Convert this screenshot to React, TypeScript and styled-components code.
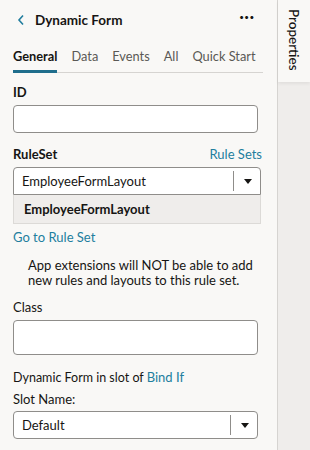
import React from "react";
import styled, { createGlobalStyle } from "styled-components";

const GlobalStyle = createGlobalStyle`
  html, body {
    margin: 0;
    padding: 0;
    background: #f9f8f6;
  }
  body {
    font-family: Lato, "Noto Sans", sans-serif;
    color: #161513;
  }
`;

const Shell = styled.div`
  display: flex;
  width: 310px;
  height: 450px;
  overflow: hidden;
`;

const Panel = styled.div`
  width: 277px;
  flex-shrink: 0;
  background: #f9f8f6;
  padding: 0 15px 0 13px;
  box-sizing: border-box;
`;

const Rail = styled.div`
  flex: 1;
  display: flex;
  flex-direction: column;
  border-left: 1px solid #d6d4d1;
  background: #efedeb;
`;

const RailTab = styled.div`
  height: 82px;
  background: #f9f8f6;
  display: flex;
  justify-content: center;
  padding-top: 9px;
  box-sizing: border-box;
  box-shadow: 0 2px 3px rgba(0, 0, 0, 0.06);
`;

const RailLabel = styled.span`
  writing-mode: vertical-rl;
  font-size: 13.5px;
  font-weight: 500;
  color: #161513;
`;

const Header = styled.div`
  display: flex;
  align-items: center;
  height: 40px;
  padding-right: 2px;
`;

const BackButton = styled.span`
  display: flex;
  align-items: center;
  width: 14px;
  margin-left: 4px;
  margin-right: 4px;
  color: #227e9e;
`;

const Title = styled.div`
  flex: 1;
  font-size: 13.5px;
  font-weight: 700;
`;

const More = styled.span`
  font-size: 15px;
  font-weight: 900;
  letter-spacing: 1px;
  margin-right: 5px;
  line-height: 1;
  transform: translateY(-4px);
`;

const Tabs = styled.div`
  display: flex;
  gap: 14px;
  border-bottom: 1px solid #d6d4d1;
  margin-right: -1px;
  height: 32px;
  align-items: flex-end;
`;

const Tab = styled.div<{ $active?: boolean }>`
  font-size: 12.8px;
  font-weight: ${(p) => (p.$active ? 700 : 400)};
  color: ${(p) => (p.$active ? "#161513" : "#5a5855")};
  padding-bottom: 6px;
  border-bottom: ${(p) => (p.$active ? "3px solid #1f6e8c" : "3px solid transparent")};
  margin-bottom: -1px;
  white-space: nowrap;
`;

const Field = styled.div<{ $top?: number }>`
  display: flex;
  flex-direction: column;
  margin-top: ${(p) => p.$top ?? 0}px;
`;

const LabelRow = styled.div`
  display: flex;
  justify-content: space-between;
  align-items: baseline;
  margin-bottom: 5px;
`;

const Label = styled.span<{ $bold?: boolean }>`
  font-size: 13px;
  font-weight: ${(p) => (p.$bold ? 700 : 400)};
`;

const Link = styled.a`
  color: #227e9e;
  font-size: 13px;
  text-decoration: none;
  cursor: pointer;
`;

const TextInput = styled.div<{ $h: number; $w?: number }>`
  height: ${(p) => p.$h}px;
  width: ${(p) => p.$w ?? 245}px;
  box-sizing: border-box;
  background: #fff;
  border: 1px solid #8f8d8a;
  border-radius: 4px;
`;

const Select = styled.div<{ $w: number; $open?: boolean }>`
  display: flex;
  align-items: center;
  height: 28px;
  width: ${(p) => p.$w}px;
  box-sizing: border-box;
  background: #fff;
  border: 1px solid #8f8d8a;
  border-radius: ${(p) => (p.$open ? "4px 4px 0 0" : "4px")};
`;

const SelectValue = styled.span`
  flex: 1;
  padding-left: 8px;
  font-size: 13px;
`;

const SelectToggle = styled.span`
  display: flex;
  align-items: center;
  justify-content: center;
  width: 26px;
  height: 20px;
  border-left: 1px solid #8f8d8a;
`;

const Caret = styled.span`
  width: 0;
  height: 0;
  border-left: 4px solid transparent;
  border-right: 4px solid transparent;
  border-top: 5px solid #161513;
  margin-left: 2px;
`;

const Option = styled.div`
  width: 248px;
  height: 29px;
  box-sizing: border-box;
  background: #efedeb;
  border: 1px solid #dcdad7;
  border-top: none;
  display: flex;
  align-items: center;
  padding-left: 10px;
  font-size: 13px;
  font-weight: 700;
`;

const Note = styled.p`
  margin: 13px 0 0 15px;
  font-size: 13px;
  line-height: 15px;
  width: 230px;
`;

const SlotText = styled.div`
  font-size: 12.5px;
  margin-top: 14px;
`;

const SlotLabel = styled.div`
  font-size: 13px;
  margin-top: 6px;
  margin-bottom: 4px;
`;

const Dropdown: React.FC<{ value: string; width: number; open?: boolean }> = ({
  value,
  width,
  open,
}) => (
  <Select $w={width} $open={open}>
    <SelectValue>{value}</SelectValue>
    <SelectToggle>
      <Caret />
    </SelectToggle>
  </Select>
);

const App: React.FC = () => {
  return (
    <Shell>
      <GlobalStyle />
      <Panel>
        <Header>
          <BackButton>
            <svg width="8" height="12" viewBox="0 0 8 12">
              <path d="M6 1.5 L2 6 L6 10.5" fill="none" stroke="currentColor" strokeWidth="1.6" />
            </svg>
          </BackButton>
          <Title>Dynamic Form</Title>
          <More>···</More>
        </Header>
        <Tabs>
          <Tab $active>General</Tab>
          <Tab>Data</Tab>
          <Tab>Events</Tab>
          <Tab>All</Tab>
          <Tab>Quick Start</Tab>
        </Tabs>

        <Field $top={11}>
          <LabelRow>
            <Label $bold>ID</Label>
          </LabelRow>
          <TextInput $h={28} />
        </Field>

        <Field $top={13}>
          <LabelRow>
            <Label $bold>RuleSet</Label>
            <Link>Rule Sets</Link>
          </LabelRow>
          <Dropdown value="EmployeeFormLayout" width={248} open />
          <Option>EmployeeFormLayout</Option>
        </Field>

        <Field $top={5}>
          <Link>Go to Rule Set</Link>
        </Field>
        <Note>App extensions will NOT be able to add new rules and layouts to this rule set.</Note>

        <Field $top={11}>
          <LabelRow>
            <Label>Class</Label>
          </LabelRow>
          <TextInput $h={35} />
        </Field>

        <SlotText>
          Dynamic Form in slot of <Link as="span">Bind If</Link>
        </SlotText>
        <SlotLabel>Slot Name:</SlotLabel>
        <Dropdown value="Default" width={245} />
      </Panel>
      <Rail>
        <RailTab>
          <RailLabel>Properties</RailLabel>
        </RailTab>
      </Rail>
    </Shell>
  );
};

export default App;
